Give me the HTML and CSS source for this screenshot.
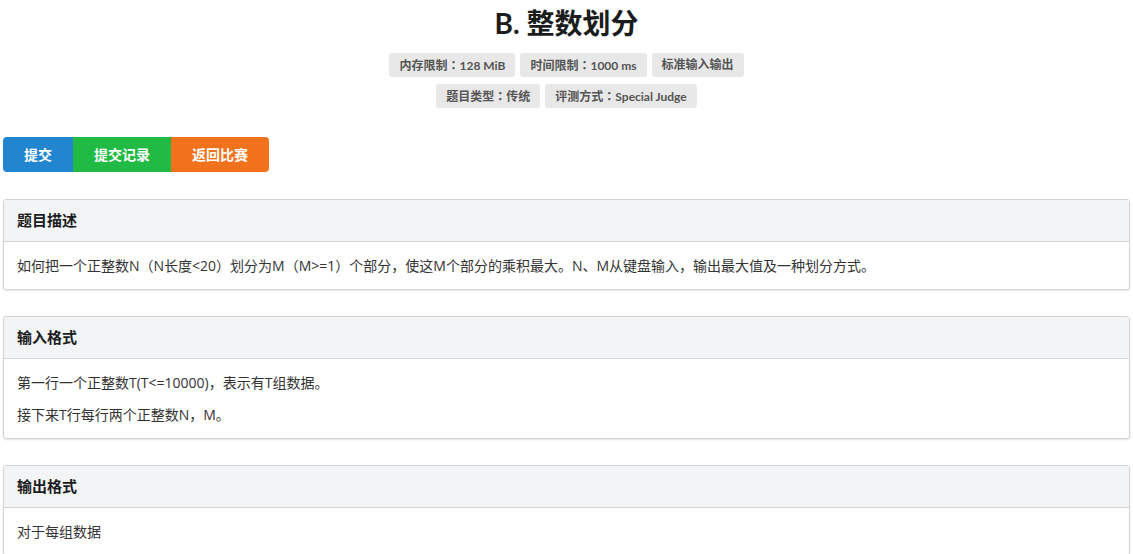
FILE: index.html
```html
<!DOCTYPE html>
<html lang="zh-CN">
<head>
<meta charset="utf-8">
<title>B. 整数划分</title>
<link rel="stylesheet" href="styles.css">
</head>
<body>
<div class="page">
  <div class="head">
    <h1 class="title">B. 整数划分</h1>
    <div class="labels">
      <span class="label">内存限制<span class="colon" lang="zh-TW">：</span>128 MiB</span>
      <span class="label">时间限制<span class="colon" lang="zh-TW">：</span>1000 ms</span>
      <span class="label">标准输入输出</span>
    </div>
    <div class="labels">
      <span class="label">题目类型<span class="colon" lang="zh-TW">：</span>传统</span>
      <span class="label">评测方式<span class="colon" lang="zh-TW">：</span>Special Judge</span>
    </div>
  </div>
  <div class="buttons">
    <a class="btn blue">提交</a>
    <a class="btn green">提交记录</a>
    <a class="btn orange">返回比赛</a>
  </div>
  <div class="panel">
    <div class="panel-head">题目描述</div>
    <div class="panel-body">
      <p>如何把一个正整数N（N长度&lt;20）划分为M（M&gt;=1）个部分，使这M个部分的乘积最大。N、M从键盘输入，输出最大值及一种划分方式。</p>
    </div>
  </div>
  <div class="panel">
    <div class="panel-head">输入格式</div>
    <div class="panel-body">
      <p>第一行一个正整数T(T&lt;=10000)，表示有T组数据。</p>
      <p>接下来T行每行两个正整数N，M。</p>
    </div>
  </div>
  <div class="panel">
    <div class="panel-head">输出格式</div>
    <div class="panel-body">
      <p>对于每组数据</p>
    </div>
  </div>
</div>
</body>
</html>
```

FILE: styles.css
```css
* { box-sizing: border-box; }
html, body { margin: 0; padding: 0; background: #fff; }
body {
  font-family: "Lato", "Noto Sans CJK SC", sans-serif;
  color: #333;
  font-size: 14px;
}
.page { padding: 0 3px; }
.head {
  display: flex;
  flex-direction: column;
  align-items: center;
}
.title {
  margin: 4px 0 0;
  font-size: 28px;
  line-height: 38px;
  font-weight: 700;
  color: #1b1c1d;
}
.labels {
  display: flex;
  gap: 5px;
  margin-top: 11px;
}
.labels + .labels { margin-top: 7px; }
.label {
  display: inline-block;
  height: 24px;
  overflow: hidden;
  background: #e8e8e8;
  color: #555;
  font-size: 12px;
  font-weight: 700;
  line-height: 14px;
  padding: 5px 10px;
  border-radius: 3px;
}
.colon {
  font-family: "Noto Sans CJK TC", sans-serif;
}
.buttons {
  display: flex;
  margin-top: 29px;
}
.btn {
  display: inline-block;
  color: #fff;
  font-size: 14px;
  font-weight: 700;
  line-height: 14px;
  padding: 11px 21px 10px;
  cursor: pointer;
}
.blue { background: #2185d0; border-radius: 4px 0 0 4px; }
.green { background: #21ba45; }
.orange { background: #f2711c; border-radius: 0 4px 4px 0; }
.panel {
  margin-top: 26px;
  border: 1px solid #d4d4d5;
  border-radius: 3px;
  box-shadow: 0 1px 2px rgba(34,36,38,0.12);
  background: #fff;
}
.buttons + .panel { margin-top: 27px; }
.panel-head {
  background: #f3f4f5;
  border-bottom: 1px solid #d4d4d5;
  font-size: 15px;
  font-weight: 700;
  color: #1b1c1d;
  padding: 12px 13px;
  line-height: 17px;
}
.panel-body {
  padding: 13px 13px 12px;
}
.panel-body p {
  margin: 0;
  line-height: 22px;
  color: #333;
  font-family: "Open Sans", "Noto Sans CJK SC", sans-serif;
}
.panel-body p + p { margin-top: 10px; }
```
